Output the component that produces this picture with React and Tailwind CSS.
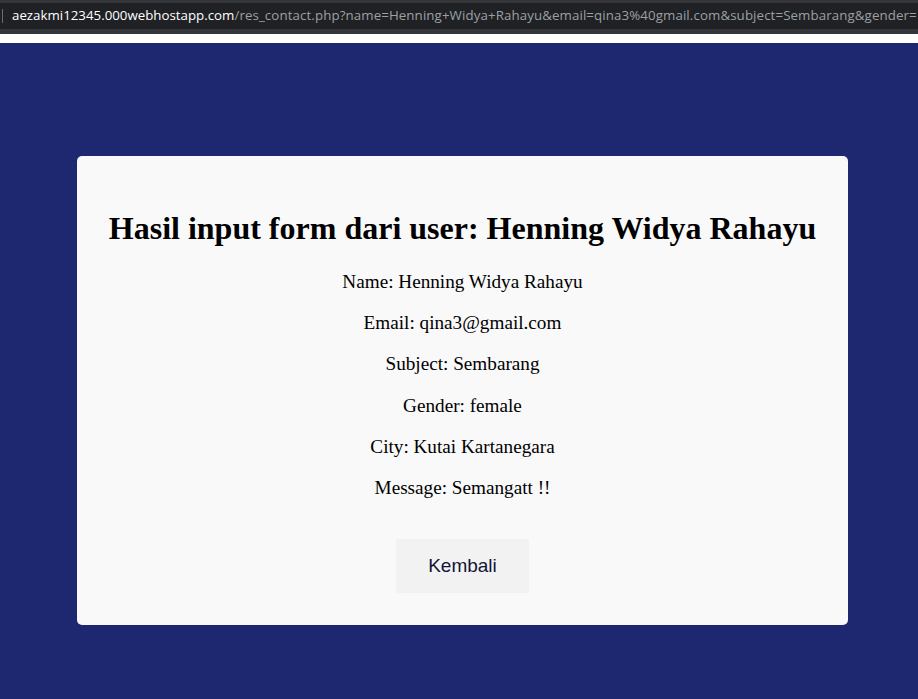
export default function App() {
  const rows = [
    "Name: Henning Widya Rahayu",
    "Email: qina3@gmail.com",
    "Subject: Sembarang",
    "Gender: female",
    "City: Kutai Kartanegara",
    "Message: Semangatt !!",
  ];
  return (
    <div className="w-[918px] h-[699px] overflow-hidden flex flex-col bg-[#1d2870]">
      <div className="h-[34px] bg-[#35363a] pt-[3px] flex flex-col">
        <div className="h-[26px] bg-[#202124] flex items-center overflow-hidden">
          <div className="w-[1px] h-[14px] bg-[#6b6b6b] ml-[2px] shrink-0" />
          <div
            className="ml-[9px] text-[13.3px] tracking-[0.1px] whitespace-nowrap leading-none"
            style={{ fontFamily: '"Open Sans", "Noto Sans", sans-serif' }}
          >
            <span className="text-white tracking-normal">aezakmi12345.000webhostapp.com</span>
            <span className="text-[#9aa0a6]">/res_contact.php?name=Henning+Widya+Rahayu&amp;email=qina3%40gmail.com&amp;subject=Sembarang&amp;gender=</span>
          </div>
        </div>
      </div>
      <div className="h-[9px] bg-white" />
      <div className="flex-1 flex flex-col pl-[77px] pt-[113px]">
        <div
          className="w-[771px] h-[469px] bg-[#f9f9f9] rounded-[5px] flex flex-col items-center pt-[54px]"
          style={{ fontFamily: '"Liberation Serif", "Times New Roman", serif' }}
        >
          <h1 className="text-[32px] font-bold text-black leading-[1.15] mb-[24px]">
            Hasil input form dari user: Henning Widya Rahayu
          </h1>
          {rows.map((r) => (
            <p key={r} className="text-[19.2px] text-black leading-[1.15] mb-[19.2px]">
              {r}
            </p>
          ))}
          <button
            className="mt-[21px] w-[133px] h-[54px] bg-[#f2f2f2] text-[19px] text-[#14143a]"
            style={{ fontFamily: '"Liberation Sans", Arial, sans-serif' }}
          >
            Kembali
          </button>
        </div>
      </div>
    </div>
  );
}
